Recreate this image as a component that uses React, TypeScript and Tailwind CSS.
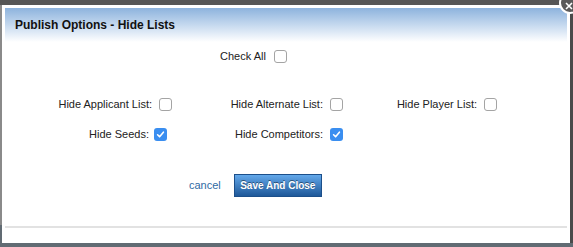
import React from "react";

function Box({ checked = false }: { checked?: boolean }) {
  if (checked) {
    return (
      <span className="flex h-[13px] w-[13px] items-center justify-center rounded-[3px] bg-[#3a8ef0]">
        <svg width="9" height="9" viewBox="0 0 9 9">
          <path d="M1.6 4.8 L3.6 6.8 L7.4 2.2" fill="none" stroke="white" strokeWidth="1.6" strokeLinecap="round" strokeLinejoin="round" />
        </svg>
      </span>
    );
  }
  return <span className="block h-[13px] w-[13px] rounded-[3px] border border-[#a4a4a4] bg-white" />;
}

export default function App() {
  const label = "pr-[7px] text-right text-[11px] leading-[16px] text-[#222]";

  return (
    <div className="relative h-[247px] w-[573px] overflow-hidden bg-[#616b73] font-['Liberation_Sans',Arial,sans-serif]">
      {/* page behind the dialog */}
      <div className="h-[5px] bg-[#565656]" />
      <div className="absolute left-0 top-[5px] h-[220px] w-[2px] bg-[#8a8a8a]" />
      <div className="absolute right-0 top-[5px] h-[238px] w-[3px] bg-[#4a4a4a]" />

      <div className="ml-[2px] h-[238px] w-[568px] bg-white p-[3px]">
        <div className="flex h-[34px] items-center bg-gradient-to-b from-[#8db3dd] to-white pl-[10px]">
          <span className="text-[12px] font-bold text-[#111]">Publish Options - Hide Lists</span>
        </div>

        <div className="mt-[6px] flex h-[16px] items-center pl-[215px]">
          <span className="text-[11px] text-[#222]">Check All</span>
          <span className="ml-[8px]"><Box /></span>
        </div>

        <div className="mt-[32px] grid grid-cols-[154px_12px_159px_12px_142px_12px] items-center gap-y-[14px]">
          <span className={label}>Hide Applicant List:</span>
          <Box />
          <span className={label}>Hide Alternate List:</span>
          <Box />
          <span className={label}>Hide Player List:</span>
          <Box />

          <span className="pr-[10px] text-right text-[11px] leading-[16px] text-[#222]">Hide Seeds:</span>
          <span className="-ml-[5px]"><Box checked /></span>
          <span className={label}>Hide Competitors:</span>
          <Box checked />
        </div>

        <div className="mt-[32px] flex h-[23px] items-center pl-[184px]">
          <span className="text-[11px] text-[#2f6aa3]">cancel</span>
          <button className="ml-[13px] h-[23px] w-[88px] border border-[#1c4f8a] bg-gradient-to-b from-[#63a8ea] to-[#1e5899] text-[10px] font-bold text-white [text-shadow:0_-1px_0_rgba(0,0,0,0.45)]">
            Save And Close
          </button>
        </div>

        <div className="mt-[29px] h-[2px] bg-[#e2e2e2]" />
      </div>

      {/* close button */}
      <div className="absolute left-[559px] top-[-8px] flex h-[22px] w-[22px] items-center justify-center rounded-full border-2 border-white bg-[#5a5a5a]">
        <svg width="10" height="10" viewBox="0 0 10 10" className="mt-[5px] -ml-[2px]">
          <path d="M2 2 L8 8 M8 2 L2 8" stroke="white" strokeWidth="1.6" />
        </svg>
      </div>
    </div>
  );
}
